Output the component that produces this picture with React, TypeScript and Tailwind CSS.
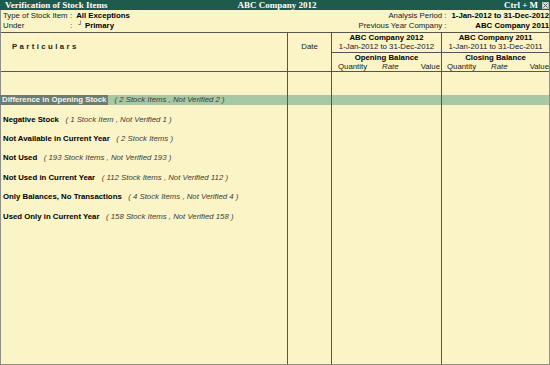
import React from "react";

const COLS = "grid grid-cols-[287px_44px_110px_1fr]";
const LINE = "border-[#56564e]";

function Row({
  band,
  children,
}: {
  band?: boolean;
  children?: React.ReactNode;
}) {
  const inner = band ? "h-[10px] w-full bg-[#a8c7a3] flex items-center" : "";
  return (
    <div className={`${COLS} h-[19.4px]`}>
      <div className={`border-r ${LINE} flex items-center`}>
        <div className={band ? inner : "flex items-center w-full"}>{children}</div>
      </div>
      <div className={`border-r ${LINE} flex items-center`}>
        {band && <div className={inner} />}
      </div>
      <div className={`border-r ${LINE} flex items-center`}>
        {band && <div className={inner} />}
      </div>
      <div className="flex items-center">{band && <div className={inner} />}</div>
    </div>
  );
}

function Item({ label, note }: { label: string; note: string }) {
  return (
    <>
      <span className="pl-[2px] font-bold text-black">{label}</span>
      <span className="ml-[6.5px] italic text-[#3c3c38]">{note}</span>
    </>
  );
}

export default function App() {
  const items = [
    ["Negative Stock", "( 1 Stock Item , Not Verified 1 )"],
    ["Not Available in Current Year", "( 2 Stock Items )"],
    ["Not Used", "( 193 Stock Items , Not Verified 193 )"],
    ["Not Used in Current Year", "( 112 Stock Items , Not Verified 112 )"],
    ["Only Balances, No Transactions", "( 4 Stock Items , Not Verified 4 )"],
    ["Used Only in Current Year", "( 158 Stock Items , Not Verified 158 )"],
  ];
  return (
    <div className="w-[550px] h-[365px] flex flex-col bg-[#fbf4c6] overflow-hidden font-['Liberation_Sans',Arial,sans-serif] text-[7.8px] leading-[9px] text-[#1a1a1a]">
      {/* Title bar */}
      <div className="h-[10px] bg-[#1f5b4d] flex items-center pl-[5px] pr-[1px] text-white font-['Liberation_Serif','Times_New_Roman',serif] font-bold text-[9px] leading-[10px]">
        <div className="flex-1 whitespace-nowrap">Verification of Stock Items</div>
        <div className="whitespace-nowrap">ABC Company 2012</div>
        <div className="flex-1 flex justify-end items-center whitespace-nowrap">
          <span>Ctrl + M</span>
          <span className="ml-[4px] w-[7px] h-[7px] bg-[#dfe6e0] border border-[#b7c2ba] flex items-center justify-center">
            <svg width="5" height="5" viewBox="0 0 5 5">
              <path d="M0.5 0.5 L4.5 4.5 M4.5 0.5 L0.5 4.5" stroke="#4f5a53" strokeWidth="1" />
            </svg>
          </span>
        </div>
      </div>

      {/* Body */}
      <div className="flex-1 flex flex-col border-l border-r border-b border-[#8e9088]">
        {/* Info block */}
        <div className={`h-[23px] border-b ${LINE} flex justify-between pt-[1px] leading-[10px]`}>
          <div className="flex flex-col">
            <div className="flex h-[10px]">
              <span className="w-[69px] pl-[2px]">Type of Stock Item</span>
              <span>:</span>
              <span className="ml-[4px] font-bold text-black">All Exceptions</span>
            </div>
            <div className="flex h-[10px]">
              <span className="w-[69px] pl-[2px]">Under</span>
              <span>:</span>
              <span className="ml-[6px] text-[6px] leading-[7px] font-bold text-black">┘</span>
              <span className="ml-[2.5px] font-bold text-black">Primary</span>
            </div>
          </div>
          <div className="grid grid-cols-[auto_auto] gap-x-[5px] h-[20px]">
            <span className="text-right h-[10px]">Analysis Period :</span>
            <span className="text-right font-bold text-black h-[10px]">1-Jan-2012 to 31-Dec-2012</span>
            <span className="text-right h-[10px]">Previous Year Company :</span>
            <span className="text-right font-bold text-black h-[10px]">ABC Company 2011</span>
          </div>
        </div>

        {/* Column header */}
        <div className={`${COLS} h-[39px] border-b ${LINE}`}>
          <div className={`border-r ${LINE} pl-[11px] pt-[9px] leading-[10px] font-bold text-[#222] tracking-[2.4px]`}>
            Particulars
          </div>
          <div className={`border-r ${LINE} pt-[9px] text-center`}>Date</div>
          <div className={`border-r ${LINE} flex flex-col`}>
            <div className={`h-[20px] border-b ${LINE} flex flex-col items-center`}>
              <span className="font-bold text-black">ABC Company 2012</span>
              <span>1-Jan-2012 to 31-Dec-2012</span>
            </div>
            <div className="flex flex-col">
              <span className="text-center font-bold text-black">Opening Balance</span>
              <div className="flex pl-[6px] pr-[1px]">
                <span className="w-[44px]">Quantity</span>
                <span className="italic">Rate</span>
                <span className="ml-auto">Value</span>
              </div>
            </div>
          </div>
          <div className="flex flex-col">
            <div className={`h-[20px] border-b ${LINE} flex flex-col items-center`}>
              <span className="font-bold text-black">ABC Company 2011</span>
              <span>1-Jan-2011 to 31-Dec-2011</span>
            </div>
            <div className="flex flex-col">
              <span className="text-center font-bold text-black">Closing Balance</span>
              <div className="flex pl-[5px] pr-0">
                <span className="w-[44px]">Quantity</span>
                <span className="italic">Rate</span>
                <span className="ml-auto">Value</span>
              </div>
            </div>
          </div>
        </div>

        {/* Rows */}
        <div className={`${COLS} h-[18px]`}>
          <div className={`border-r ${LINE}`} />
          <div className={`border-r ${LINE}`} />
          <div className={`border-r ${LINE}`} />
          <div />
        </div>
        <Row band>
          <span className="h-full flex items-center bg-[#6d7c71] text-[#f4f4ee] font-bold pl-[2px] pr-[2px] -ml-[1px]">
            Difference in Opening Stock
          </span>
          <span className="ml-[6px] italic text-[#3c3c38]">( 2 Stock Items , Not Verified 2 )</span>
        </Row>
        {items.map(([l, n]) => (
          <Row key={l}>
            <Item label={l} note={n} />
          </Row>
        ))}
        <div className={`${COLS} flex-1`}>
          <div className={`border-r ${LINE}`} />
          <div className={`border-r ${LINE}`} />
          <div className={`border-r ${LINE}`} />
          <div />
        </div>
      </div>
    </div>
  );
}
